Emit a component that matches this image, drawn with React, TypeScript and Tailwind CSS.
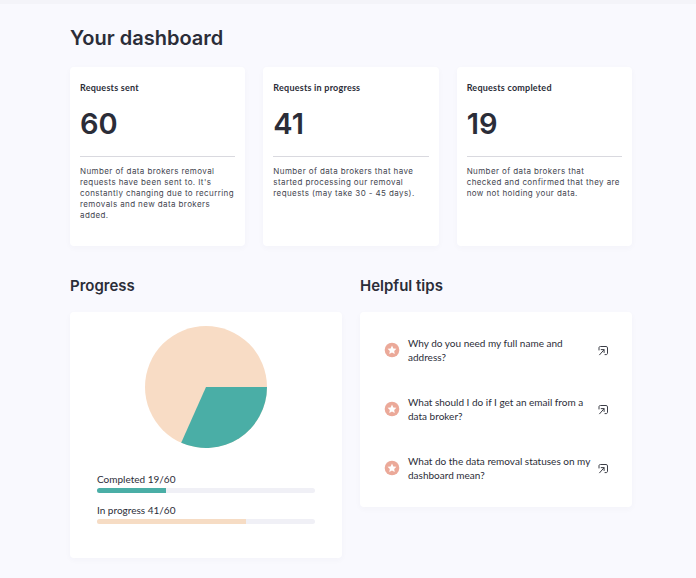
import React from "react";

const cards = [
  {
    title: "Requests sent",
    value: 60,
    description:
      "Number of data brokers removal requests have been sent to. It's constantly changing due to recurring removals and new data brokers added.",
  },
  {
    title: "Requests in progress",
    value: 41,
    description:
      "Number of data brokers that have started processing our removal requests (may take 30 - 45 days).",
  },
  {
    title: "Requests completed",
    value: 19,
    description:
      "Number of data brokers that\nchecked and confirmed that they are now not holding your data.",
  },
];

const bars = [
  { label: "Completed", count: 19, total: 60, color: "bg-[#4aaea6]" },
  { label: "In progress", count: 41, total: 60, color: "bg-[#f6dcc4]" },
];

const tips = [
  "Why do you need my full name and address?",
  "What should I do if I get an email from a data broker?",
  "What do the data removal statuses on my dashboard mean?",
];

const StarBadge = () => (
  <svg viewBox="0 0 16 16" className="h-4 w-4 shrink-0" aria-hidden="true">
    <circle cx="8" cy="8" r="7.3" fill="#eba999" />
    <path
      d="M8 3.6l1.35 2.8 3.05.42-2.22 2.13.54 3.05L8 10.55 5.28 12l.54-3.05L3.6 6.82l3.05-.42z"
      fill="#fff"
    />
  </svg>
);

const OpenIcon = () => (
  <svg
    viewBox="0 0 12 12"
    className="h-3 w-3 shrink-0"
    fill="none"
    stroke="#3c3e47"
    strokeLinecap="round"
    strokeLinejoin="round"
    aria-hidden="true"
  >
    <path d="M2 6V3.9C2 2.9 2.5 2.5 3.4 2.5h5.7c.9 0 1.4.5 1.4 1.4v5.2c0 1-.5 1.5-1.4 1.5H8" />
    <path d="M2.6 10.8l4.3-4.9M4.2 5.6h2.9v2.9" />
  </svg>
);

const Pie = () => (
  <svg
    viewBox="-61 -61 122 122"
    className="mx-auto h-[122px] w-[122px]"
    role="img"
    aria-label="19 of 60 requests completed"
  >
    <circle r="61" fill="#f8dcc5" />
    <path d="M0 0H61A61 61 0 0 1 -24.8 55.7Z" fill="#4aaea6" />
  </svg>
);

export default function App() {
  return (
    <div className="min-h-screen bg-[#f9f9fe] font-['Lato',sans-serif] text-[#2b2d38]">
      <div className="h-1 bg-[#f4f4f9]" />
      <main className="pt-5 pr-16 pb-5 pl-[70px]">
        <h1 className="font-['Inter',sans-serif] text-xl leading-7 font-semibold">
          Your dashboard
        </h1>

        <section className="mt-[15px] grid grid-cols-3 gap-[18px]">
          {cards.map((card) => (
            <article
              key={card.title}
              className="min-h-[179px] rounded-sm bg-white px-2.5 pt-3.5 pb-6 shadow-[0_2px_6px_rgba(60,60,110,0.03)]"
            >
              <h2 className="text-[9px] leading-[14px] font-bold tracking-wide">
                {card.title}
              </h2>
              <p className="mt-[9px] font-['Inter',sans-serif] text-[29px] leading-10 font-semibold">
                {card.value}
              </p>
              <hr className="mt-3 border-[#d9d9df]" />
              <p className="mt-[9px] font-['Inter',sans-serif] text-[8px] leading-[11px] tracking-wider whitespace-pre-line text-[#43454f]">
                {card.description}
              </p>
            </article>
          ))}
        </section>

        <div className="mt-7 grid grid-cols-2 items-start gap-[18px]">
          <section>
            <h2 className="font-['Inter',sans-serif] text-[15px] leading-6 font-semibold">
              Progress
            </h2>
            <div className="mt-3.5 rounded bg-white px-[27px] pt-3.5 pb-[34px] shadow-[0_2px_6px_rgba(60,60,110,0.03)]">
              <Pie />
              <div className="mt-6 flex flex-col gap-2.5">
                {bars.map((bar) => (
                  <div key={bar.label}>
                    <p className="text-[10px] leading-[14px]">
                      {bar.label} {bar.count}/{bar.total}
                    </p>
                    <div className="mt-0.5 h-[5px] overflow-hidden rounded-full bg-[#f0f0f6]">
                      <div
                        className={`h-full ${bar.color}`}
                        style={{ width: `${(bar.count / bar.total) * 100}%` }}
                      />
                    </div>
                  </div>
                ))}
              </div>
            </div>
          </section>

          <section>
            <h2 className="font-['Inter',sans-serif] text-[15px] leading-6 font-semibold">
              Helpful tips
            </h2>
            <ul className="mt-3.5 flex flex-col gap-[31px] rounded bg-white pt-6 pr-[23px] pb-[25px] pl-6 shadow-[0_2px_6px_rgba(60,60,110,0.03)]">
              {tips.map((tip) => (
                <li key={tip}>
                  <a href="#" className="flex items-center">
                    <StarBadge />
                    <span className="mr-1 ml-2 flex-1 text-[10px] leading-[14px]">
                      {tip}
                    </span>
                    <OpenIcon />
                  </a>
                </li>
              ))}
            </ul>
          </section>
        </div>
      </main>
    </div>
  );
}
